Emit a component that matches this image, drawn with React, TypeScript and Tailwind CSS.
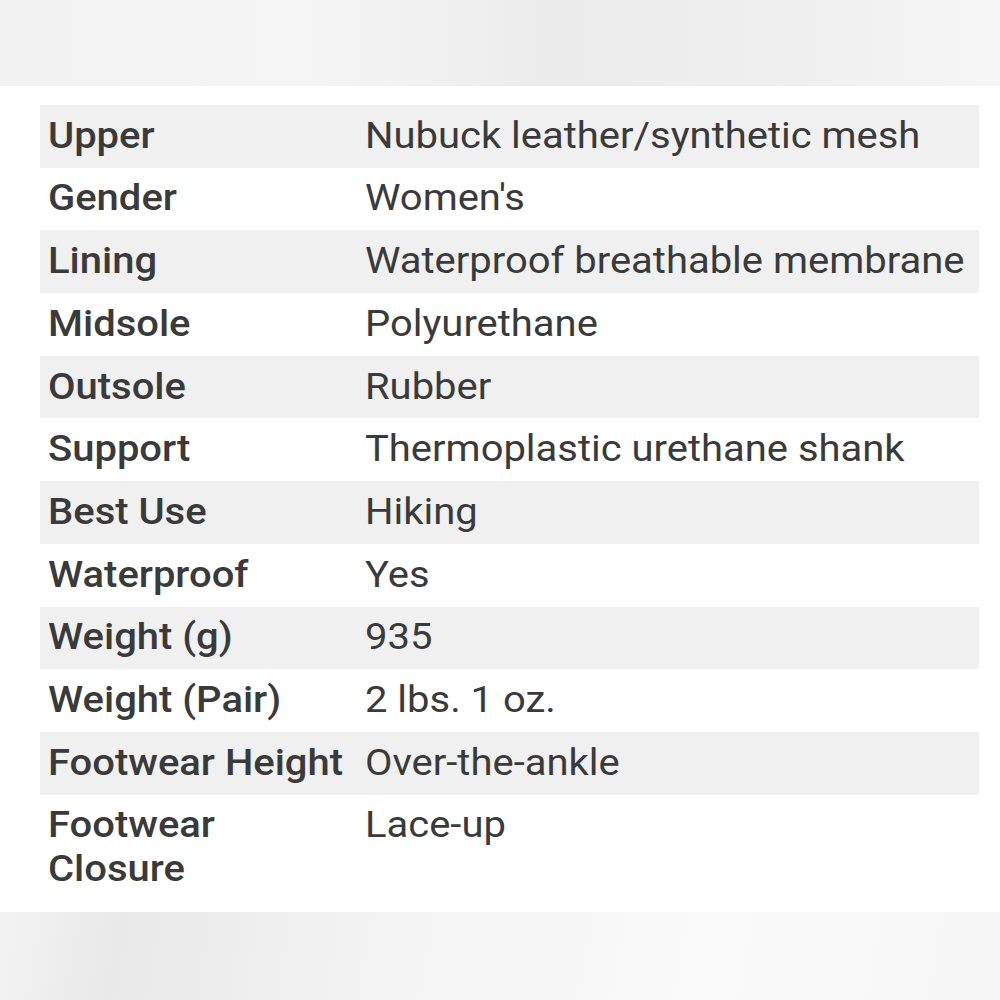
const specs: [string, string][] = [
  ["Upper", "Nubuck leather/synthetic mesh"],
  ["Gender", "Women's"],
  ["Lining", "Waterproof breathable membrane"],
  ["Midsole", "Polyurethane"],
  ["Outsole", "Rubber"],
  ["Support", "Thermoplastic urethane shank"],
  ["Best Use", "Hiking"],
  ["Waterproof", "Yes"],
  ["Weight (g)", "935"],
  ["Weight (Pair)", "2 lbs. 1 oz."],
  ["Footwear Height", "Over-the-ankle"],
  ["Footwear Closure", "Lace-up"],
];

// the screenshot is stretched sideways a bit, so glyphs get a scale-x
export default function App() {
  return (
    <div className="flex h-[1000px] w-[1000px] flex-col bg-white font-['Roboto',sans-serif] text-[#3a3a3a]">
      <div className="h-[86px] bg-[linear-gradient(90deg,#f2f2f2_0%,#f5f5f5_30%,#ececec_55%,#efefef_80%,#f6f6f6_100%)]" />
      <div className="px-[40px] pb-[12px] pt-[19px]">
        <table className="w-[939px] table-fixed border-collapse text-[36px] leading-[1.2]">
          <tbody>
            {specs.map(([label, value], i) => (
              <tr key={label} className={i % 2 === 0 ? "bg-[#f0f0f0]" : "bg-white"}>
                <td className="w-[317px] px-[8px] py-[9.75px] align-top font-medium">
                  <div className="w-[271px] origin-left scale-x-[1.11]">{label}</div>
                </td>
                <td className="px-[8px] py-[9.75px] align-top">
                  <div className="origin-left scale-x-[1.11] whitespace-nowrap">{value}</div>
                </td>
              </tr>
            ))}
          </tbody>
        </table>
      </div>
      <div className="flex-1 bg-[linear-gradient(100deg,#f3f3f3_0%,#e9e9e9_12%,#f4f4f4_40%,#fafafa_70%,#f7f7f7_100%)]" />
    </div>
  );
}
